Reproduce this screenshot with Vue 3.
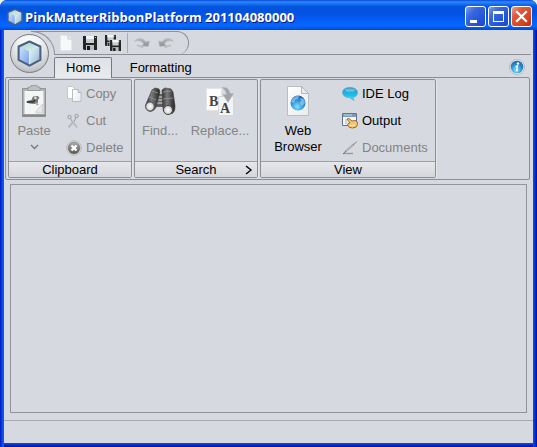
<script setup>
import { ref } from 'vue'

const title = 'PinkMatterRibbonPlatform 201104080000'
const tabs = ['Home', 'Formatting']
const activeTab = ref('Home')
</script>

<template>
  <div class="window">
    <svg class="defs" width="0" height="0" aria-hidden="true">
      <defs>
        <linearGradient id="gTop" x1="0" y1="0" x2="1" y2="1"><stop offset="0" stop-color="#a4d0d2" /><stop offset="1" stop-color="#dff5ea" /></linearGradient>
        <linearGradient id="gLeft" x1="0" y1="0" x2="1" y2="1"><stop offset="0" stop-color="#cfe2fb" /><stop offset=".5" stop-color="#a2c2f4" /><stop offset="1" stop-color="#6e9ae6" /></linearGradient>
        <linearGradient id="gRight" x1="0" y1="0" x2="1" y2="1"><stop offset="0" stop-color="#e8f5fa" /><stop offset=".6" stop-color="#b4cfe2" /><stop offset="1" stop-color="#84a6c8" /></linearGradient>
        <linearGradient id="gPage" x1="0" y1="0" x2="1" y2="1"><stop offset="0" stop-color="#ffffff" /><stop offset="1" stop-color="#e9ebee" /></linearGradient>
        <radialGradient id="gGlobe" cx=".45" cy=".75" r=".75"><stop offset="0" stop-color="#7fe4ff" /><stop offset=".55" stop-color="#2f93d8" /><stop offset="1" stop-color="#1c5ba8" /></radialGradient>
        <linearGradient id="gBubble" x1="0" y1="0" x2="0" y2="1"><stop offset="0" stop-color="#2c8fc0" /><stop offset=".6" stop-color="#16c1ee" /><stop offset="1" stop-color="#6be5fb" /></linearGradient>
        <linearGradient id="gBarrel" x1="0" y1="0" x2="1" y2="0"><stop offset="0" stop-color="#333" /><stop offset=".4" stop-color="#7b7b7b" /><stop offset="1" stop-color="#222" /></linearGradient>
        <radialGradient id="gLens"><stop offset="0" stop-color="#fff" /><stop offset="1" stop-color="#c5c8cb" /></radialGradient>
        <linearGradient id="gGray" x1="0" y1="0" x2="0" y2="1"><stop offset="0" stop-color="#b0b0b0" /><stop offset="1" stop-color="#555" /></linearGradient>
        <linearGradient id="gArrow" x1="0" y1="0" x2="0" y2="1"><stop offset="0" stop-color="#b9babc" /><stop offset="1" stop-color="#8f9092" /></linearGradient>
        <symbol id="cube" viewBox="0 0 24 26">
          <path d="M12 2 22 6.500v12.500l-10 5.500L2 19V6.500z" fill="#a9c6ec" />
          <path d="M2 6.500 12 11v13.500L2 19z" fill="url(#gLeft)" />
          <path d="M22 6.500 12 11v13.500L22 19z" fill="url(#gRight)" />
          <path d="M12 2 22 6.500 12 11 2 6.500z" fill="url(#gTop)" />
          <path d="M12 11v13" stroke="#eaf5fc" stroke-width=".8" />
          <path d="M12 1.500 22.500 6.200v13l-10.500 5.500L1.500 19.200v-13z" fill="none" stroke="#4b6080" stroke-width="2" stroke-linejoin="round" />
        </symbol>
        <symbol id="disk" viewBox="0 0 14 14">
          <path d="M0 0h14v14H1l-1-1z" fill="#252525" /><path d="M3 0h8v7H3z" fill="#c9ccd0" /><path d="M3 0h8v3H3z" fill="#f4f5f6" /><path d="M3 9h8v5H3z" fill="#b9bcc0" /><path d="M4 10h3v4H4z" fill="#1b1b1b" /><path d="M12 1h1v1h-1z" fill="#ccc" />
        </symbol>
        <symbol id="turn" viewBox="0 0 16 13">
          <path d="M.5 4.500C3 .5 9 0 11.500 4.500L15.500 4l-1 5.500-7-.5 2-2C8 4 4 3 .5 4.500z" fill="url(#gArrow)" stroke="#c4c5c8" stroke-width=".6" />
          <path d="M3 8.500q4 0 6 2.500" fill="none" stroke="#b9babd" stroke-width="1.500" />
        </symbol>
      </defs>
    </svg>

    <header class="titlebar">
      <svg class="title-icon" width="16" height="18"><use href="#cube" /></svg>
      <h1>{{ title }}</h1>
      <button class="caption" aria-label="Minimize"><svg width="19" height="19"><path d="M4 13h7v3H4z" fill="#fff" /></svg></button>
      <button class="caption" aria-label="Maximize"><svg width="19" height="19"><path d="M4 4h11v11H4zM5 7v7h9V7z" fill="#fff" fill-rule="evenodd" /></svg></button>
      <button class="caption close" aria-label="Close"><svg width="19" height="19"><path d="m5 5 9 9M14 5l-9 9" stroke="#fff" stroke-width="2.200" stroke-linecap="square" /></svg></button>
    </header>

    <main class="client">
      <button class="orb" aria-label="Application menu"><svg width="25" height="27"><use href="#cube" /></svg></button>

      <div class="quick-row">
        <div class="quick">
          <span class="curve"></span>
          <div class="quick-icons">
            <button disabled aria-label="New">
              <svg width="12" height="16"><path d="M.5.500h7.500l3.500 3.500v11.500H.5z" fill="#f7f8f9" stroke="#e4e6e9" /><path d="M8 .5V4h3.500" fill="#eceef0" stroke="#c6c8cc" /></svg>
            </button>
            <button aria-label="Save">
              <svg width="14" height="14"><use href="#disk" /></svg>
            </button>
            <button aria-label="Save all">
              <svg width="16" height="16"><use href="#disk" width="11" height="11" /><path d="M4.500 4.500H16V16H4.500z" fill="#d6d9e0" /><use href="#disk" x="5" y="5" width="11" height="11" /></svg>
            </button>
            <span class="divider"></span>
            <button disabled aria-label="Undo">
              <svg width="16" height="13"><use href="#turn" /></svg>
            </button>
            <button disabled aria-label="Redo">
              <svg class="mirrored" width="16" height="13"><use href="#turn" /></svg>
            </button>
          </div>
        </div>
        <div class="rule"></div>
      </div>

      <div class="tab-row">
        <nav class="tabs" role="tablist">
          <button v-for="tab in tabs" :key="tab" role="tab" class="tab" :class="{ active: tab === activeTab }" :aria-selected="tab === activeTab" @click="activeTab = tab">{{ tab }}</button>
        </nav>
        <button class="info" aria-label="Information">
          <svg width="16" height="16"><circle cx="8" cy="8" r="7.500" fill="#e8ecef" stroke="#b4b9c0" /><circle cx="8" cy="8" r="6.300" fill="url(#gGlobe)" /><path d="M6.500 7.500 8.500 7l-1 4.500H9" fill="none" stroke="#fff" stroke-width="1.300" /><circle cx="9" cy="4.500" r="1.200" fill="#fff" /></svg>
        </button>
      </div>

      <section class="ribbon">
        <div class="group">
          <div class="group-body">
            <button class="big paste" disabled>
              <svg width="24" height="32">
                <path d="M.5 3.500h23v28H.5z" fill="#b2b3b5" stroke="#929395" /><path d="M.5 30.500h23" stroke="#858688" stroke-width="2" /><path d="M2.500 6h19v23h-19z" fill="#f4f5f6" />
                <path d="M6 2h3V.5h6V2h3v3.500H6z" fill="#c0c1c3" stroke="#8b8c8e" stroke-width=".7" />
                <path d="M4.500 16.500c2-1.500 3-1 5-1.500l1.500-3.500 5-.5 1.500 2-1.500 1.500v3l-3.500 1.500-5-.5-3-1z" fill="#777" /><path d="M5 17h6l2-2" fill="none" stroke="#333" stroke-width="1.600" /><circle cx="13.500" cy="13" r="1.300" fill="#ddd" /><path d="m14 18 2 2" stroke="#aaa" stroke-width="2" />
                <path d="m13.500 27 7-8v9h-6z" fill="#e6e7e9" stroke="#bbbcbf" stroke-width=".6" />
              </svg>
              <span>Paste</span>
              <svg class="chevron" width="9" height="6"><path d="m1 1 3.500 3.500L8 1" fill="none" stroke="#777" stroke-width="1.300" /></svg>
            </button>
            <div class="stack">
              <button class="small" disabled>
                <svg width="16" height="16"><path d="M1.500.500h5l3 3v9h-8z" fill="#fff" stroke="#c4c6c9" /><path d="M6.500 3.500H12l3 3v9H6.500z" fill="url(#gPage)" stroke="#bbbdc0" /><path d="M12 3.500v3h3" fill="none" stroke="#b0b2b5" /></svg>
                Copy
              </button>
              <button class="small" disabled>
                <svg width="16" height="16" fill="none" stroke="#999b9e"><circle cx="3.500" cy="4" r="1.700" /><circle cx="10.500" cy="3" r="1.700" /><path d="m4.500 5.500 3 5M10 4.500l-3 6" /><path d="m7.500 8.500-5 6M6.500 8.500l4.500 6" stroke="#b9bbbe" stroke-width="2" /></svg>
                Cut
              </button>
              <button class="small" disabled>
                <svg width="16" height="16"><circle cx="8" cy="8" r="7.400" fill="#eceded" stroke="#b0b0b0" stroke-width=".8" /><circle cx="8" cy="8" r="6" fill="url(#gGray)" stroke="#666" stroke-width=".6" /><path d="m5.500 5.500 5 5M10.500 5.500l-5 5" stroke="#fff" stroke-width="2.400" /></svg>
                Delete
              </button>
            </div>
          </div>
          <footer><span>Clipboard</span></footer>
        </div>

        <div class="group">
          <div class="group-body">
            <button class="big find" disabled>
              <svg width="32" height="32">
                <path d="M12 9h9l2 13H10z" fill="#5f5f5f" /><path d="M13 12h6M12 15h8M12 18h8" stroke="#e5e5e5" />
                <path d="m8 5 3-2 4 1 1 3-4 15q-2 5-7 4-4-2-3-7z" fill="url(#gBarrel)" stroke="#444" stroke-width=".7" />
                <path d="m18 5 3-2 6 1 2 3 2 14q0 8-5 8-7 0-7-6z" fill="url(#gBarrel)" stroke="#444" stroke-width=".7" />
                <path d="m8 6 6 2M19 7l8-1M5 12l7 3M19 14l10-1" stroke="#999" stroke-width=".8" />
                <ellipse cx="6" cy="21.500" rx="4.300" ry="4.600" fill="url(#gLens)" stroke="#444" /><ellipse cx="24" cy="25" rx="4.500" ry="4.500" fill="url(#gLens)" stroke="#444" />
              </svg>
              <span>Find...</span>
            </button>
            <button class="big replace" disabled>
              <svg width="30" height="32">
                <path d="M1.500 3.500h15v22h-15z" fill="#fdfdfd" stroke="#e2e4e7" /><path d="M13.500 11.500h15v19h-15z" fill="#f3f4f5" stroke="#d5d7da" />
                <text x="4" y="21" class="letter">B</text><text x="15" y="28" class="letter">A</text>
                <path d="M17 2.500q7-1 8 6h3.500l-5.500 9-5-8h3.500q0-4-4.500-7z" fill="#a2a3a5" stroke="#b5b6b8" stroke-width=".6" />
              </svg>
              <span>Replace...</span>
            </button>
          </div>
          <footer><span>Search</span><button class="launcher" aria-label="Search options"><svg width="8" height="10"><path d="m1 1 5 4-5 4" fill="none" stroke="#000" stroke-width="1.400" /></svg></button></footer>
        </div>

        <div class="group view-group">
          <div class="group-body">
            <button class="big web">
              <svg width="24" height="32">
                <path d="M1.500 1.500h14l7 7v22h-21z" fill="url(#gPage)" stroke="#bcbec1" /><path d="M15.500 1.500v7h7z" fill="#e8e9eb" stroke="#b5b7ba" />
                <circle cx="12" cy="18" r="7.500" fill="url(#gGlobe)" /><path d="M6 14q4-4 7-3l-1 3-3 1-1 3-3-1zM14 13l4 1 1 4-3 3-2-3 1-2z" fill="#bdeaf9" opacity=".5" />
              </svg>
              <span>Web<br />Browser</span>
            </button>
            <div class="stack">
              <button class="small">
                <svg width="16" height="16"><path d="M8 1.500c4.500 0 7.500 2.200 7.500 5S13 11.200 11 11.500l1 3-4.500-3C3.500 11.500.5 9.500.5 6.500s3-5 7.500-5z" fill="url(#gBubble)" stroke="#5cadc9" stroke-width=".8" /><ellipse cx="8" cy="4.200" rx="5" ry="1.600" fill="#83cbe5" opacity=".7" /></svg>
                IDE Log
              </button>
              <button class="small">
                <svg width="16" height="16"><path d="M.5.500h14v12H.5z" fill="#f4f7fa" stroke="#60768c" /><path d="M1 1h13v3H1z" fill="#7f9ab3" /><path d="M2 2h8" stroke="#c5d6e5" /><path d="M3 6h2v5H3z" fill="#c7d2dd" /><path d="m5 6 2-.5 3 2.500 3-.5q3 .5 2.500 4-.5 3.500-5 3.500-4 0-5-3l.5-1.500 2-.5z" fill="#f3c777" stroke="#a76918" /><path d="m8 12 2 1 3-1" fill="none" stroke="#fff0b8" /></svg>
                Output
              </button>
              <button class="small" disabled>
                <svg width="16" height="16"><path d="M1 13.500h10" stroke="#999" stroke-width="1.400" /><path d="m3 12 9-8" stroke="#b0b0b0" stroke-width="2.200" /><path d="m11 5 4-3.500" stroke="#888" /><path d="m1 14 3-3" stroke="#777" /></svg>
                Documents
              </button>
            </div>
          </div>
          <footer><span>View</span></footer>
        </div>
      </section>

      <section class="workspace" aria-label="Workspace"></section>
      <footer class="status"></footer>
    </main>
  </div>
</template>

<style>
body { margin: 0; background: #f4f1e4; }
</style>

<style scoped>
* { box-sizing: border-box; }
.window {
  min-height: 100vh;
  display: flex;
  flex-direction: column;
  padding: 0 4px 4px;
  border-radius: 7px 7px 0 0;
  background: linear-gradient(90deg, #0020c8 0, #0020c8 1px, #0a4ee8 2px, #0a5cf0 4px, transparent 4px, transparent calc(100% - 4px), #0a50f0 calc(100% - 4px), #0030d8 calc(100% - 2px), #00108c 100%), linear-gradient(0deg, #00108c 0, #0030d0 2px, #0a4ee8 4px);
  font-family: "Liberation Sans", Arial, sans-serif;
  font-size: 13px;
  line-height: 16px;
  color: #000;
}
.defs { position: absolute; }
svg { display: block; flex: none; }
button { font: inherit; color: inherit; border: 0; padding: 0; margin: 0; background: none; }
button:disabled { color: #848484; }

.titlebar {
  height: 30px;
  margin: 0 -4px;
  padding: 3px 5px 0 7px;
  display: flex;
  align-items: center;
  gap: 2px;
  border-radius: 7px 7px 0 0;
  background: linear-gradient(#0a48d8 0, #2f8aff 2px, #1470f0 4px, #0354dc 7px, #0352e2 13px, #0660fa 22px, #0468ff 26px, #0148d4 30px);
}
h1 {
  flex: 1;
  margin: 0;
  font: bold 13px/18px "Open Sans", "Trebuchet MS", sans-serif;
  color: #fff;
  text-shadow: 1px 1px 0 #0a1c80;
  white-space: nowrap;
}
.caption {
  width: 21px;
  height: 21px;
  border: 1px solid #fff;
  border-radius: 3px;
  background: linear-gradient(135deg, #7c9df2 0, #3a68e0 30%, #2454d8 70%, #1c48c4 100%);
}
.close { background: linear-gradient(135deg, #f0a088 0, #e0583a 30%, #d8451f 70%, #b83010 100%); }

.client {
  position: relative;
  flex: 1;
  display: flex;
  flex-direction: column;
  background: #d6d9e0;
}
.orb {
  position: absolute;
  left: 6px;
  top: 4px;
  width: 39px;
  height: 39px;
  display: grid;
  place-items: center;
  border: 1px solid #777a80;
  border-radius: 50%;
  background: radial-gradient(circle at 50% 25%, #fff 0, #f0f1f2 35%, #c6c8cb 75%, #989a9e 100%);
  z-index: 2;
}
.quick-row { display: flex; padding: 1px 2px 0 27px; }
.quick {
  display: flex;
  height: 24px;
  border: solid #8e9096;
  border-width: 1px 1px 0 0;
  border-radius: 0 12px 12px 0;
}
.curve {
  width: 24px;
  height: 24px;
  margin-top: -1px;
  border: solid #8e9096;
  border-width: 1px 1px 0 0;
  border-top-right-radius: 23px;
}
.quick-icons {
  display: flex;
  align-items: center;
  gap: 8px;
  padding: 0 14px 0 5px;
  border-bottom: 1px solid #8e9096;
}
.quick-icons button:nth-child(2) { margin-left: 3px; }
.divider { width: 1px; height: 20px; background: #a9abb0; margin: 0 -2px; }
.mirrored { transform: scaleX(-1); }
.rule { flex: 1; margin-left: -12px; border-bottom: 1px solid #8e9096; }

.tab-row {
  display: flex;
  justify-content: space-between;
  align-items: center;
  padding: 2px 8px 0 50px;
}
.tabs { display: flex; }
.tab {
  position: relative;
  height: 21px;
  padding: 0 10px 0 11px;
  margin-bottom: -1px;
  border: 1px solid transparent;
  border-bottom: 0;
}
.tab + .tab { margin-left: 6px; }
.tab.active {
  border-color: #77797f;
  border-radius: 2px 2px 0 0;
  background: linear-gradient(#dfe1e6, #e9ebee);
  z-index: 1;
}

.ribbon {
  display: flex;
  gap: 2px;
  margin: 0 3px 0 1px;
  padding: 1px 2px;
  border: 1px solid #8c8e93;
  border-radius: 2px;
}
.group {
  width: 124px;
  display: flex;
  flex-direction: column;
  border: 1px solid #8c8e93;
  border-radius: 2px;
  box-shadow: 1px 0 0 #e4e6ea;
}
.view-group { width: 176px; }
.group-body { display: flex; height: 81px; }
.group > footer {
  display: grid;
  grid-template-columns: 16px 1fr 16px;
  align-items: center;
  border-top: 1px solid #9c9ea3;
  background: linear-gradient(#e6e7ea, #d3d6dc);
  line-height: 15px;
}
.group > footer span { grid-column: 2; text-align: center; }
.launcher { justify-self: center; }
.big {
  width: 50px;
  display: flex;
  flex-direction: column;
  align-items: center;
  gap: 6px;
  padding-top: 5px;
}
.replace { width: 70px; }
.web { width: 74px; }
.chevron { margin-top: -1px; }
.stack { display: grid; grid-template-rows: repeat(3, 27px); padding-left: 7px; }
.small { display: flex; align-items: center; gap: 4px; white-space: nowrap; }
.letter { font: bold 14px "Liberation Serif", serif; fill: #444; }

.workspace {
  flex: 1;
  margin: 4px 6px 7px;
  border: 1px solid #92949c;
}
.status { height: 23px; border-top: 1px solid #a6a9af; }
</style>
